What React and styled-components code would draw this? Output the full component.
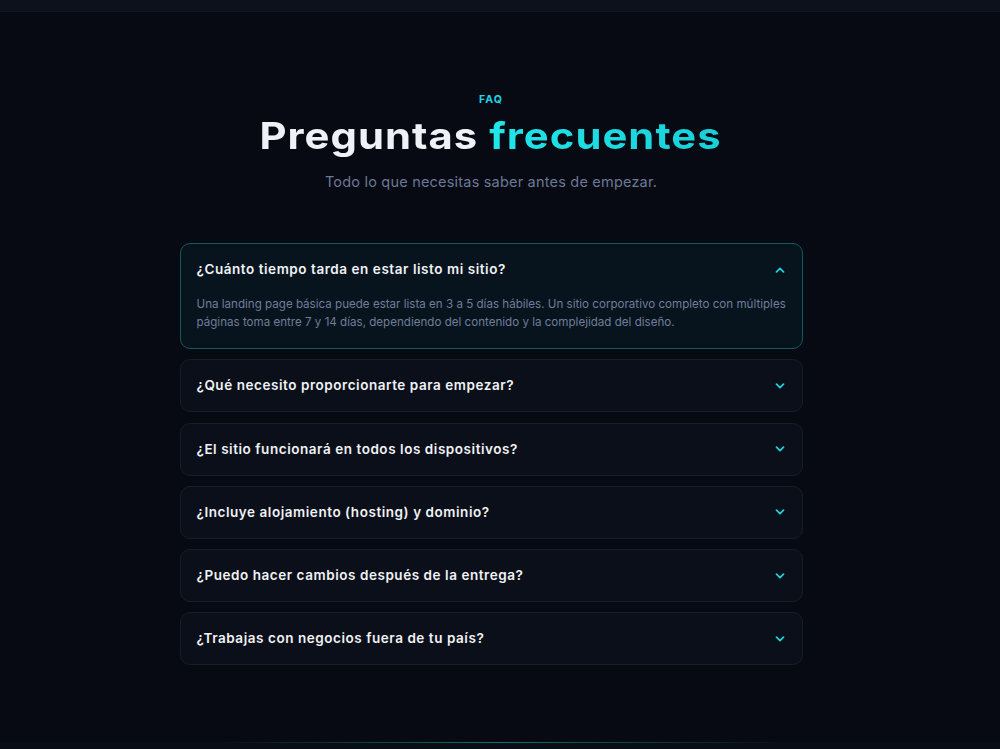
import React, { useState } from "react";
import styled, { createGlobalStyle } from "styled-components";

const Global = createGlobalStyle`
  html, body { margin: 0; padding: 0; background: #070a12; }
  body { font-family: Inter, "Noto Sans", sans-serif; -webkit-font-smoothing: antialiased; }
  * { box-sizing: border-box; }
`;

const Page = styled.div`
  min-height: 749px;
  display: flex;
  flex-direction: column;
  background: #070a12;
`;

const TopBar = styled.div`
  height: 12px;
  background: #0c111c;
  border-bottom: 1px solid #111726;
`;

const Section = styled.section`
  display: flex;
  flex-direction: column;
  align-items: center;
  padding: 81px 18px 0 0;
  height: 730px;
`;

const Eyebrow = styled.span`
  font-family: Inter, sans-serif;
  font-size: 10.5px;
  font-weight: 700;
  letter-spacing: 1px;
  color: #22d3e6;
  line-height: 14px;
`;

const Title = styled.h2`
  margin: 6px 0 0;
  font-family: Inter, sans-serif;
  font-size: 37px;
  font-weight: 700;
  letter-spacing: 0.9px;
  line-height: 46px;
  color: #eef1f6;
  transform: scaleX(1.13);
`;

const Accent = styled.span`
  color: #1ee0e6;
  background: linear-gradient(90deg, #20e6ea, #18cfd8);
  -webkit-background-clip: text;
  background-clip: text;
  -webkit-text-fill-color: transparent;
`;

const Subtitle = styled.p`
  margin: 13px 0 0;
  font-family: Inter, sans-serif;
  font-size: 14.5px;
  letter-spacing: 0.2px;
  color: #6b7896;
  line-height: 20px;
`;

const List = styled.div`
  margin-top: 51px;
  width: 623px;
  display: flex;
  flex-direction: column;
  gap: 10.3px;
`;

const Item = styled.div`
  border-radius: 10px;
  border: 1px solid ${(p) => (p.$open ? "#0e5b5e" : "#171d29")};
  background: ${(p) => (p.$open ? "#08141d" : "#0b0f19")};
`;

const Head = styled.button`
  all: unset;
  cursor: pointer;
  display: flex;
  align-items: center;
  justify-content: space-between;
  width: 100%;
  box-sizing: border-box;
  padding: 17px 17px 17px 16px;
  min-height: 51px;
`;

const Question = styled.span`
  font-family: Inter, sans-serif;
  font-size: 13.5px;
  font-weight: 600;
  letter-spacing: 0.55px;
  color: #f0f2f6;
  line-height: 17px;
`;

const Answer = styled.p`
  margin: 0;
  padding: 0 8px 17px 16px;
  font-family: Inter, sans-serif;
  font-size: 11.6px;
  line-height: 18px;
  color: #6f7d9b;
`;

const Chevron = ({ up }) => (
  <svg width="10" height="10" viewBox="0 0 10 10" style={{ transform: up ? "rotate(180deg)" : "none" }}>
    <path d="M1.5 3.2 L5 6.6 L8.5 3.2" fill="none" stroke="#1fd0dc" strokeWidth="1.8" strokeLinecap="round" strokeLinejoin="round" />
  </svg>
);

const Footer = styled.div`
  flex: 1;
  background: #090d16;
  position: relative;
  &::before {
    content: "";
    position: absolute;
    top: 0;
    left: 0;
    right: 0;
    height: 1px;
    background: linear-gradient(90deg, transparent 22%, #0f6f72 50%, transparent 78%);
  }
`;

const faqs = [
  {
    q: "¿Cuánto tiempo tarda en estar listo mi sitio?",
    a: "Una landing page básica puede estar lista en 3 a 5 días hábiles. Un sitio corporativo completo con múltiples páginas toma entre 7 y 14 días, dependiendo del contenido y la complejidad del diseño.",
  },
  { q: "¿Qué necesito proporcionarte para empezar?", a: "" },
  { q: "¿El sitio funcionará en todos los dispositivos?", a: "" },
  { q: "¿Incluye alojamiento (hosting) y dominio?", a: "" },
  { q: "¿Puedo hacer cambios después de la entrega?", a: "" },
  { q: "¿Trabajas con negocios fuera de tu país?", a: "" },
];

export default function App() {
  const [open, setOpen] = useState(0);
  return (
    <Page>
      <Global />
      <TopBar />
      <Section>
        <Eyebrow>FAQ</Eyebrow>
        <Title>
          Preguntas <Accent>frecuentes</Accent>
        </Title>
        <Subtitle>Todo lo que necesitas saber antes de empezar.</Subtitle>
        <List>
          {faqs.map((f, i) => (
            <Item key={i} $open={open === i}>
              <Head onClick={() => setOpen(open === i ? -1 : i)}>
                <Question>{f.q}</Question>
                <Chevron up={open === i} />
              </Head>
              {open === i && <Answer>{f.a}</Answer>}
            </Item>
          ))}
        </List>
      </Section>
      <Footer />
    </Page>
  );
}
